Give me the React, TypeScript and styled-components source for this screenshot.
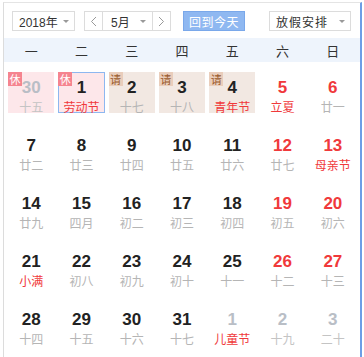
import React from "react";
import styled, { createGlobalStyle } from "styled-components";

const Global = createGlobalStyle`
  html, body { margin: 0; padding: 0; background: #fff; }
  body { font-family: "Liberation Sans", Arial, "Noto Sans CJK SC", sans-serif; }
`;

const Frame = styled.div`
  margin: 2px 0 0 3px;
  width: 356px;
  height: 360px;
  border-top: 1px solid #e4e4e4;
  border-left: 1px solid #dcdcdc;
  border-right: 2px solid #6d9ee6;
  box-sizing: content-box;
`;

const Toolbar = styled.div`
  height: 35px;
  display: flex;
  align-items: flex-start;
  padding: 8px 0 0 8px;
  box-sizing: border-box;
`;

const Select = styled.div<{ $w: number; $ml?: number }>`
  width: ${(p) => p.$w}px;
  height: 20px;
  margin-left: ${(p) => p.$ml || 0}px;
  border: 1px solid #dcdcdc;
  box-sizing: border-box;
  display: flex;
  align-items: center;
  justify-content: space-between;
  padding: 0 5px 0 6px;
  font-size: 12px;
  color: #333;
  font-family: "Liberation Sans", Arial, "Noto Sans CJK SC", sans-serif;
  background: #fff;
`;

const Caret = styled.span`
  width: 0;
  height: 0;
  border-left: 3px solid transparent;
  border-right: 3px solid transparent;
  border-top: 3px solid #999;
`;

const Group = styled.div`
  display: flex;
  margin-left: 9px;
`;

const ArrowBtn = styled.div`
  width: 19px;
  height: 20px;
  border: 1px solid #dcdcdc;
  box-sizing: border-box;
  display: flex;
  align-items: center;
  justify-content: center;
  color: #999;
  background: #fff;
  & + & { border-left: none; }
`;

const MonthSel = styled(Select)`
  border-left: none;
  border-right: none;
  padding: 0 6px 0 8px;
`;

const TodayBtn = styled.div`
  width: 62px;
  height: 20px;
  margin-left: 12px;
  background: #8fb8f1;
  border: 1px solid #7aa8ea;
  box-sizing: border-box;
  color: #fff;
  font-size: 12px;
  display: flex;
  align-items: center;
  justify-content: center;
  letter-spacing: 0.5px;
`;

const WeekHead = styled.div`
  height: 24px;
  background: #eef4fc;
  display: grid;
  grid-template-columns: repeat(7, 1fr);
  padding: 0 4px;
  column-gap: 4px;
  align-items: center;
`;

const WeekDay = styled.div`
  text-align: center;
  font-size: 13px;
  color: #333;
`;

const Grid = styled.div`
  display: grid;
  grid-template-columns: repeat(7, 1fr);
  grid-auto-rows: 41px;
  column-gap: 4px;
  row-gap: 17px;
  padding: 10px 4px 0 4px;
`;

type Kind = "none" | "rest" | "work";

const Cell = styled.div<{ $kind: Kind; $sel?: boolean }>`
  position: relative;
  box-sizing: border-box;
  background: ${(p) => (p.$kind === "rest" ? "#fde7ea" : p.$kind === "work" ? "#f2e8e2" : "transparent")};
  border: 1px solid ${(p) => (p.$sel ? "#8db7f0" : "transparent")};
  display: flex;
  flex-direction: column;
  align-items: center;
  padding-top: 5px;
`;

const Num = styled.div<{ $c: string }>`
  font-size: 17px;
  font-weight: bold;
  line-height: 20px;
  color: ${(p) => p.$c};
`;

const Lunar = styled.div<{ $c: string }>`
  font-size: 12px;
  line-height: 15px;
  margin-top: 1px;
  color: ${(p) => p.$c};
  font-family: "Noto Sans CJK SC", sans-serif;
`;

const Badge = styled.span<{ $kind: Kind }>`
  position: absolute;
  left: -1px;
  top: -1px;
  width: 14px;
  height: 14px;
  font-size: 11px;
  line-height: 14px;
  text-align: center;
  font-family: "Noto Sans CJK SC", sans-serif;
  background: ${(p) => (p.$kind === "rest" ? "#f5848f" : "#e9cdbb")};
  color: ${(p) => (p.$kind === "rest" ? "#fff" : "#9a5a2c")};
`;

type Day = {
  n: number;
  l: string;
  other?: boolean;
  red?: boolean;
  fest?: boolean;
  kind?: Kind;
  sel?: boolean;
};

const days: Day[] = [
  { n: 30, l: "十五", other: true, kind: "rest" },
  { n: 1, l: "劳动节", fest: true, kind: "rest", sel: true },
  { n: 2, l: "十七", kind: "work" },
  { n: 3, l: "十八", kind: "work" },
  { n: 4, l: "青年节", fest: true, kind: "work" },
  { n: 5, l: "立夏", red: true, fest: true },
  { n: 6, l: "廿一", red: true },
  { n: 7, l: "廿二" },
  { n: 8, l: "廿三" },
  { n: 9, l: "廿四" },
  { n: 10, l: "廿五" },
  { n: 11, l: "廿六" },
  { n: 12, l: "廿七", red: true },
  { n: 13, l: "母亲节", red: true, fest: true },
  { n: 14, l: "廿九" },
  { n: 15, l: "四月" },
  { n: 16, l: "初二" },
  { n: 17, l: "初三" },
  { n: 18, l: "初四" },
  { n: 19, l: "初五", red: true },
  { n: 20, l: "初六", red: true },
  { n: 21, l: "小满", fest: true },
  { n: 22, l: "初八" },
  { n: 23, l: "初九" },
  { n: 24, l: "初十" },
  { n: 25, l: "十一" },
  { n: 26, l: "十二", red: true },
  { n: 27, l: "十三", red: true },
  { n: 28, l: "十四" },
  { n: 29, l: "十五" },
  { n: 30, l: "十六" },
  { n: 31, l: "十七" },
  { n: 1, l: "儿童节", other: true, fest: true },
  { n: 2, l: "十九", other: true },
  { n: 3, l: "二十", other: true },
];

const weekNames = ["一", "二", "三", "四", "五", "六", "日"];

export default function App() {
  return (
    <>
      <Global />
      <Frame>
        <Toolbar>
          <Select $w={63}>
            <span>2018年</span>
            <Caret />
          </Select>
          <Group>
            <ArrowBtn>
              <svg width="7" height="11" viewBox="0 0 7 11">
                <path d="M6 1 L1.5 5.5 L6 10" fill="none" stroke="#999" strokeWidth="1" />
              </svg>
            </ArrowBtn>
            <MonthSel $w={49}>
              <span>5月</span>
              <Caret />
            </MonthSel>
            <ArrowBtn>
              <svg width="7" height="11" viewBox="0 0 7 11">
                <path d="M1 1 L5.5 5.5 L1 10" fill="none" stroke="#999" strokeWidth="1" />
              </svg>
            </ArrowBtn>
          </Group>
          <TodayBtn>回到今天</TodayBtn>
          <Select $w={82} $ml={24}>
            <span style={{ fontFamily: '"Noto Sans CJK SC", sans-serif', letterSpacing: "1px" }}>放假安排</span>
            <Caret />
          </Select>
        </Toolbar>
        <WeekHead>
          {weekNames.map((w) => (
            <WeekDay key={w}>{w}</WeekDay>
          ))}
        </WeekHead>
        <Grid>
          {days.map((d, i) => {
            const kind: Kind = d.kind || "none";
            const numColor = d.other ? "#b9bec6" : d.red ? "#f0393b" : "#222";
            const lunarColor = d.fest ? "#f0393b" : d.other ? "#c4c4c4" : "#b5b5b5";
            return (
              <Cell key={i} $kind={kind} $sel={d.sel}>
                {kind !== "none" && <Badge $kind={kind}>{kind === "rest" ? "休" : "请"}</Badge>}
                <Num $c={numColor}>{d.n}</Num>
                <Lunar $c={lunarColor}>{d.l}</Lunar>
              </Cell>
            );
          })}
        </Grid>
      </Frame>
    </>
  );
}
